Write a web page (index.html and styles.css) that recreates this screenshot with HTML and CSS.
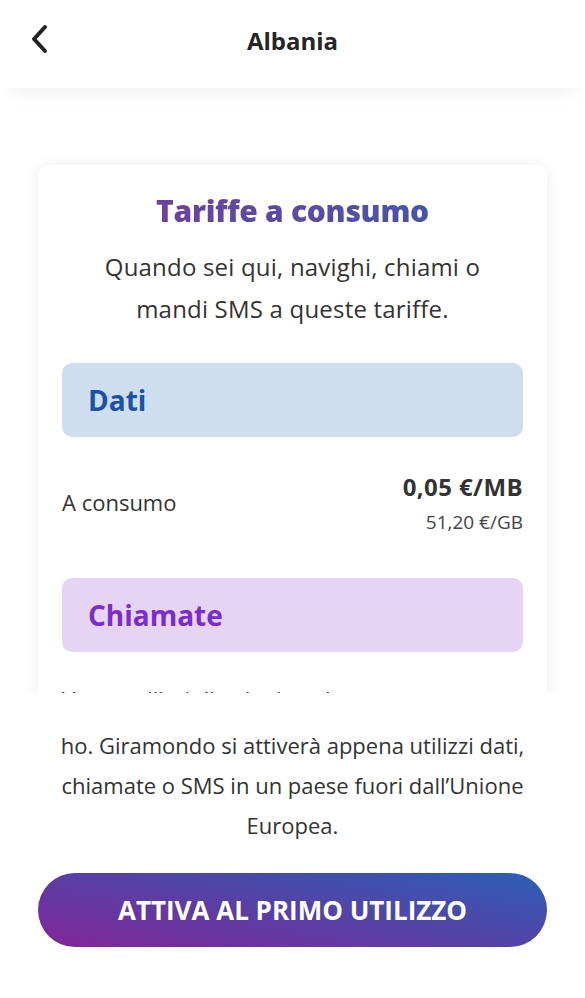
FILE: index.html
```html
<!DOCTYPE html>
<html>
<head>
	<meta charset="utf-8">
	<meta name="viewport" content="width=device-width, initial-scale=1">
	<title>Albania</title>
	<link rel="stylesheet" href="styles.css">
</head>
<body>
	<main class="app">
		<div class="topbar">
			<button class="back" aria-label="Indietro">
				<svg width="20" height="30" viewBox="0 0 20 30"><path d="M15 3 L4 15 L15 27" fill="none" stroke="#222" stroke-width="4" stroke-linecap="round" stroke-linejoin="round"/></svg>
			</button>
			<h1>Albania</h1>
		</div>
		<div class="scroll">
			<div class="card">
				<h2 class="card-title">Tariffe a consumo</h2>
				<p class="card-sub">Quando sei qui, navighi, chiami o mandi SMS a queste tariffe.</p>
				<div class="band band-data">Dati</div>
				<div class="rate">
					<span class="rate-label">A consumo</span>
					<div class="rate-price">
						<strong>0,05 €/MB</strong>
						<small>51,20 €/GB</small>
					</div>
				</div>
				<div class="band band-calls">Chiamate</div>
				<div class="rate rate-next">
					<span class="rate-label">Verso utilizzi di volta in volta</span>
				</div>
			</div>
		</div>
		<div class="sheet">
			<p>ho. Giramondo si attiverà appena utilizzi dati, chiamate o SMS in un paese fuori dall’Unione Europea.</p>
			<button class="cta">ATTIVA AL PRIMO UTILIZZO</button>
		</div>
	</main>
</body>
</html>
```

FILE: styles.css
```css
html, body{margin: 0;height: 100%;}
body{font-family: 'Open Sans', 'Noto Sans', sans-serif;color: #333;background: #fff;}
.app{display: flex;flex-direction: column;height: 998px;overflow: hidden;}

.topbar{position: relative;z-index: 2;height: 88px;display: flex;align-items: center;justify-content: center;background: #fff;box-shadow: 0 14px 22px -12px rgba(0,0,0,0.08);}
.topbar h1{margin: 0;font-size: 24px;font-weight: 700;color: #262626;padding-bottom: 8px;}
.back{position: absolute;left: 30px;top: 24px;border: 0;background: none;padding: 0;}

.scroll{flex: 1;overflow: hidden;padding: 77px 38px 0;}
.card{background: #fff;border-radius: 10px;box-shadow: 0 2px 18px rgba(0,0,0,0.08);padding: 24px 24px 30px;}
.card-title{margin: 0;text-align: center;font-size: 30px;font-weight: 800;background: linear-gradient(90deg, #7a3a9c, #3a5bb0);-webkit-background-clip: text;background-clip: text;color: transparent;line-height: 44px;letter-spacing: -0.3px;}
.card-sub{margin: 13px 24px 0;text-align: center;font-size: 24px;line-height: 42px;color: #333;letter-spacing: 0.2px;}
.band{height: 74px;border-radius: 10px;display: flex;align-items: center;padding: 0 26px;font-size: 28px;font-weight: 700;}
.band-data{margin-top: 33px;background: #cfdeef;color: #1a50b0;}
.band-calls{margin-top: 42px;background: #e6d4f5;color: #7a2ccf;}
.rate{display: flex;justify-content: space-between;align-items: center;padding-top: 36px;}
.rate-next{padding-top: 32px;}
.rate-label{font-size: 22px;color: #333;padding-bottom: 5px;}
.rate-price{display: flex;flex-direction: column;align-items: flex-end;}
.rate-price strong{font-size: 24px;font-weight: 700;color: #333;line-height: 28px;letter-spacing: 0.4px;}
.rate-price small{font-size: 19px;color: #444;line-height: 28px;margin-top: 7px;}

.sheet{position: relative;z-index: 2;height: 305px;background: #fff;box-sizing: border-box;padding: 32px 38px 0;text-align: center;}
.sheet p{margin: 0 12px;font-size: 22px;line-height: 40px;color: #333;}
.cta{display: block;width: 100%;height: 74px;margin-top: 28px;border: 0;border-radius: 37px;background: linear-gradient(10deg, #82269a 0%, #5a3ea4 45%, #2c5fb4 100%);color: #fff;font-family: 'Open Sans', sans-serif;font-size: 26px;font-weight: 700;}
```
